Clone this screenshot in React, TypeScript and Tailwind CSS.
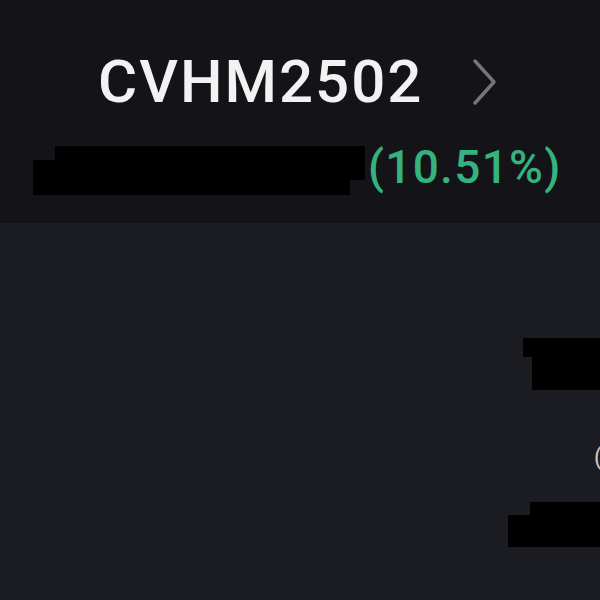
import React from "react";

export default function App() {
  return (
    <div
      className="w-[600px] h-[600px] overflow-hidden bg-[#1b1c21]"
      style={{ fontFamily: "Roboto, 'Liberation Sans', sans-serif" }}
    >
      <div className="h-[223px] bg-[#141418] pt-[52px]">
        <div className="flex items-center pl-[98px] h-[60px]">
          <span className="text-[60px] leading-[60px] font-medium text-[#f2f2f2] tracking-[2px]">
            CVHM2502
          </span>
          <svg
            className="ml-[50px]"
            width="24"
            height="48"
            viewBox="0 0 24 48"
            fill="none"
          >
            <polyline
              points="2,3 21,24 2,45"
              stroke="#76767a"
              strokeWidth="3.4"
              strokeLinecap="round"
              strokeLinejoin="round"
            />
          </svg>
        </div>
        <div className="flex items-start pl-[33px] mt-[32px]">
          <div className="flex flex-col w-[335px] pt-[2px]">
            <div className="h-[14px] ml-[22px] w-[310px] bg-black" />
            <div className="h-[20px] w-[332px] bg-black" />
            <div className="h-[15px] w-[317px] bg-black" />
          </div>
          <span className="text-[46px] leading-[46px] font-medium text-[#35b27f] tracking-[1.3px]">
            (10.51%)
          </span>
        </div>
      </div>
      <div className="pt-[115px]">
        <div className="h-[19px] ml-[523px] w-[77px] bg-black" />
        <div className="h-[33px] ml-[532px] w-[68px] bg-black" />
        <div className="mt-[56px] ml-[594px] h-[23px] text-[23px] leading-[23px] text-[#c9c9cc] whitespace-nowrap">
          (
        </div>
        <div className="mt-[33px] h-[13px] ml-[530px] w-[70px] bg-black" />
        <div className="h-[32px] ml-[508px] w-[92px] bg-black" />
      </div>
    </div>
  );
}
